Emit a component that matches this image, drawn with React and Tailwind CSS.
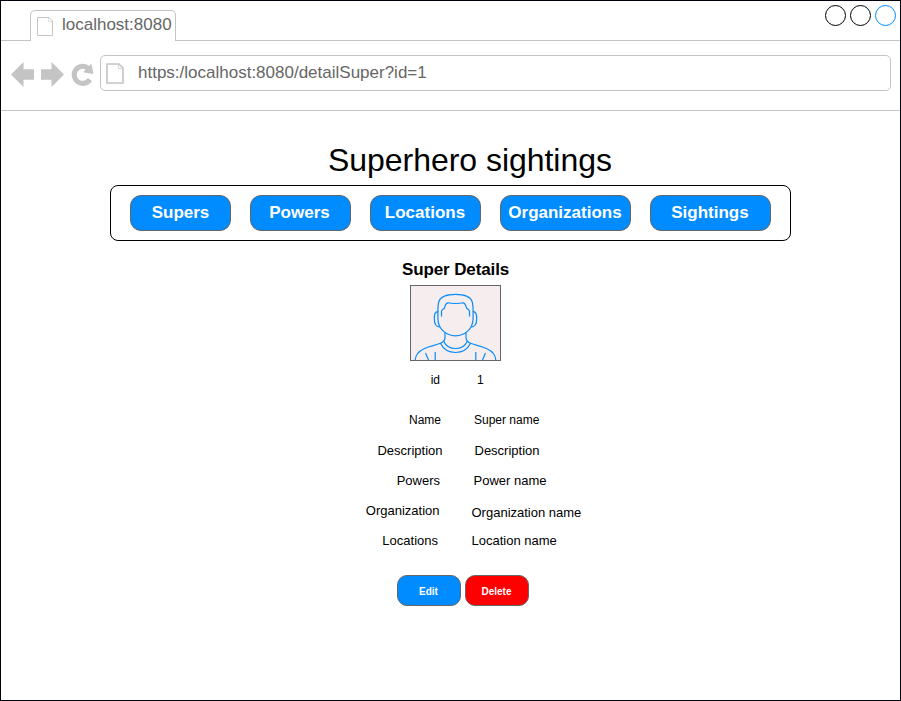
const navItems = [
  { label: "Supers", box: "w-[101px]" },
  { label: "Powers", box: "w-[101px] pr-[2px]" },
  { label: "Locations", box: "w-[111px] pr-px" },
  { label: "Organizations", box: "w-[131px] pr-px" },
  { label: "Sightings", box: "w-[121px] pr-px" },
];

const rows = [
  { label: "id", value: "1", row: "h-10 text-[12px]", left: "w-[439px]", right: "ml-[37px]" },
  { label: "Name", value: "Super name", row: "h-[31px] text-[12px]", left: "w-[440px]", right: "ml-[33px]" },
  { label: "Description", value: "Description", row: "h-[30px] text-[13px]", left: "w-[441.5px]", right: "ml-[32px]" },
  { label: "Powers", value: "Power name", row: "h-[30px] text-[13px]", left: "w-[439px]", right: "ml-[33.500px]" },
  { label: "Organization", value: "Organization name", row: "h-[30px] text-[13px]", left: "w-[438.5px]", right: "ml-[32px] mt-[2px]" },
  { label: "Locations", value: "Location name", row: "h-[39px] text-[13px]", left: "w-[437px]", right: "ml-[33.500px]" },
];

function PageIcon({ className, thick }) {
  return thick ? (
    <svg className={className} width="18" height="21" viewBox="0 0 18 21" fill="none" stroke="#c4c4c4">
      <path d="M1 1H13L17 5V20H1Z" strokeWidth="1.6" />
      <path d="M12.5 1V5.500H17" strokeWidth=".7" />
    </svg>
  ) : (
    <svg className={className} width="17" height="20" viewBox="0 0 17 20" fill="none" stroke="#c4c4c4">
      <path d="M.5 .5H12L15.500 4V18.500H.5Z" />
      <path d="M11.500 .5V4.500H15.500" strokeWidth=".5" />
    </svg>
  );
}

function NavigationIcons() {
  return (
    <svg className="ml-[10px] mt-[20px] shrink-0" width="84" height="28" viewBox="11 61 84 28">
      <path d="M11 74.5L23.5 62V69.300H34V79.700H23.5V87Z" fill="#c4c4c4" />
      <path d="M64 74.5L51.5 62V69.300H41V79.700H51.5V87Z" fill="#c4c4c4" />
      <path d="M88.500 68.300A8.600 8.600 0 1 0 90 79.500" fill="none" stroke="#c4c4c4" strokeWidth="5" />
      <path d="M91.300 63.500L93.600 74L83.200 72.300Z" fill="#c4c4c4" />
    </svg>
  );
}

function Avatar() {
  return (
    <svg width="89" height="74" viewBox="411 286 89 74" fill="none" stroke="#0a8cfa" strokeWidth="1.2">
      <path d="M437.900 312C437.900 308 438.100 304 438.900 301.500C440.500 296.500 447 294.300 455.500 294.300S470.500 296.500 472.100 301.500C472.900 304 473.100 308 473.100 312" />
      <path d="M438.300 311.700C434.500 311.500 434.300 315 434.300 319C434.300 324.500 436 327 440 327" />
      <path d="M472.700 311.700C476.500 311.500 476.700 315 476.700 319C476.700 324.500 475 327 471 327" />
      <path d="M437.900 312V319C438.300 329 446 335.800 455.500 335.800S472.700 329 473.100 319V312" />
      <path d="M441.500 316.500V311.500C441.500 309.500 443 309.500 444 308.500C445.700 306.500 444.800 303 448 302.800C451 303.700 460 303.700 463 302.800C466.200 303 465.300 306.500 467 308.500C468 309.500 469.500 309.500 469.500 311.500V316.500" />
      <path d="M445 332V337.500C445 341 443.500 342 440.500 343.300C443 348.500 448 352.500 455.500 352.500S468 348.500 470.500 343.300C467.500 342 466 341 466 337.500V332" />
      <path d="M443.700 341.200C446 346.500 450 348.500 455.500 348.500S465 346.500 467.300 341.200" />
      <path d="M440.500 343.300C435 345.500 429 346.200 424 348.700C418 351.500 415.500 354.500 415.200 360M470.500 343.300C476 345.500 482 346.200 487 348.700C493 351.500 495.500 354.500 495.800 360" />
      <path d="M425.500 353L428.500 360M435.200 352V360M485.500 353L482.500 360M475.800 352V360" />
    </svg>
  );
}

export default function App() {
  return (
    <div className="h-[701px] w-[901px] overflow-hidden border border-[#00000f] bg-white font-['Liberation_Sans',Arial,sans-serif] text-black">
      <header>
        <div className="flex h-10 items-end">
          <div className="w-[29px] border-b border-[#c4c4c4]" />
          <div className="flex h-[31px] w-[146px] rounded-t-[5px] border border-b-0 border-[#c4c4c4]">
            <PageIcon className="ml-[6px] mt-[6px] shrink-0" />
            <span className="ml-[8px] mt-[2px] whitespace-nowrap text-[17px] leading-6 text-[#666666]">localhost:8080</span>
          </div>
          <div className="flex h-10 flex-1 justify-end gap-1 border-b border-[#c4c4c4] pr-1 pt-1">
            <span className="size-[21px] rounded-full border border-[#00000f]" />
            <span className="size-[21px] rounded-full border border-[#00000f]" />
            <span className="size-[21px] rounded-full border border-[#008cff]" />
          </div>
        </div>
        <div className="flex h-[70px] border-b border-[#c4c4c4]">
          <NavigationIcons />
          <div className="ml-[5px] mt-[14px] flex h-9 w-[791px] rounded-[5px] border border-[#c4c4c4]">
            <PageIcon thick className="ml-[5px] mt-[7px] shrink-0" />
            <span className="ml-[14px] mt-[5px] text-[17px] leading-6 text-[#666666]">https:/localhost:8080/detailSuper?id=1</span>
          </div>
        </div>
      </header>
      <main>
        <h1 className="ml-[327px] mt-[29px] h-[45px] text-[32px] leading-10 tracking-[-0.04px]">Superhero sightings</h1>
        <nav className="ml-[109px] flex h-14 w-[681px] gap-[19px] rounded-[8px] border border-black pl-[19px] pt-[9px]">
          {navItems.map(({ label, box }) => (
            <button key={label} className={`${box} h-9 rounded-[11px] border border-[#666666] bg-[#008cff] text-center text-[17px] font-bold leading-6 text-white`}>
              {label}
            </button>
          ))}
        </nav>
        <h2 className="ml-[401px] mt-[17px] h-[27px] text-[17px] font-bold leading-6 tracking-[-0.12px]">Super Details</h2>
        <div className="ml-[409px] h-[76px] w-[91px] border border-[#666666] bg-[#f5edee]">
          <Avatar />
        </div>
        <dl className="mt-[9px]">
          {rows.map(({ label, value, row, left, right }) => (
            <div key={label} className={`flex leading-5 ${row}`}>
              <dt className={`${left} text-right`}>{label}</dt>
              <dd className={right}>{value}</dd>
            </div>
          ))}
        </dl>
        <div className="ml-[396px] mt-[5px] flex gap-1">
          <button className="h-[31px] w-16 rounded-[10px] border border-[#666666] bg-[#008cff] pr-px pt-px text-[10px] font-bold text-white">Edit</button>
          <button className="h-[31px] w-16 rounded-[10px] border border-[#666666] bg-[#ff0000] pr-px pt-px text-[10px] font-bold text-white">Delete</button>
        </div>
      </main>
    </div>
  );
}
